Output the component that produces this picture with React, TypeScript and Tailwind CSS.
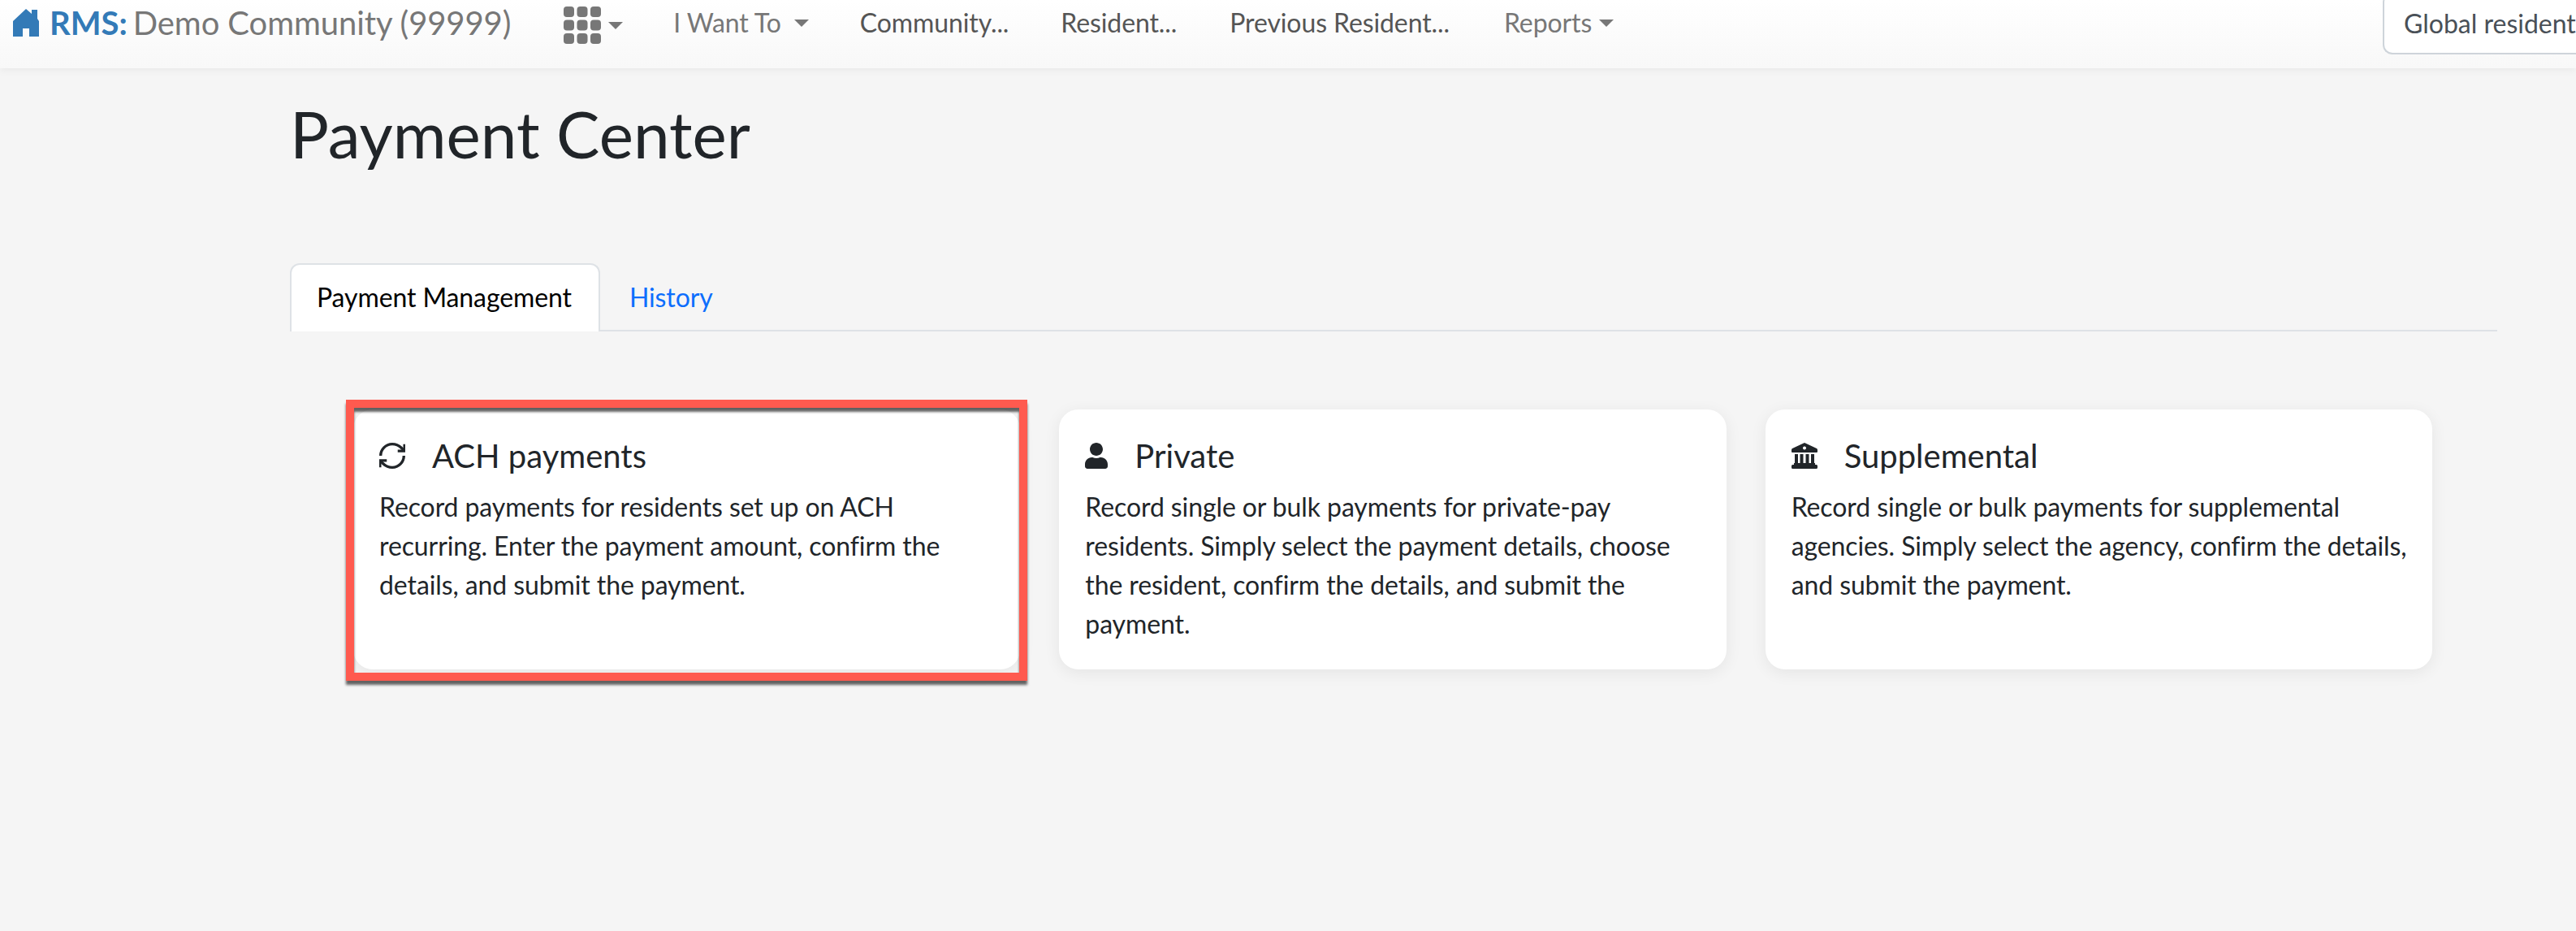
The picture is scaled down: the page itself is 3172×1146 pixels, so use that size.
import React from 'react';
import { FaUser } from 'react-icons/fa';

function SyncIcon({ className }: { className?: string }) {
  return (
    <svg viewBox="2.5 2.5 19 19" fill="none" stroke="currentColor" strokeWidth="2" className={className}>
      <path d="M3.5 12a8.5 8.5 0 0 1 8.5-8.5 9.5 9.5 0 0 1 6.5 2.6L21 8.5" />
      <path d="M21 3.5v5h-5" />
      <path d="M20.5 12a8.5 8.5 0 0 1-8.5 8.5 9.5 9.5 0 0 1-6.5-2.6L3 15.5" />
      <path d="M8 15.5H3v5" />
    </svg>
  );
}

function BankIcon({ className }: { className?: string }) {
  return (
    <svg viewBox="0 0 32 32" fill="currentColor" className={className}>
      <path fillRule="evenodd" d="M16 0 L31 7 Q32 7.5 32 9 V11 Q32 12 31 12 H1 Q0 12 0 11 V9 Q0 7.5 1 7 Z M16 4.5 a2 2 0 1 0 0.01 0 Z" />
      <rect x="4" y="14" width="4" height="11" />
      <rect x="10.5" y="14" width="4" height="11" />
      <rect x="17.5" y="14" width="4" height="11" />
      <rect x="24" y="14" width="4" height="11" />
      <path d="M3 25 H29 V27 H30.5 Q32 27 32 28.5 V30.5 Q32 32 30.5 32 H1.5 Q0 32 0 30.5 V28.5 Q0 27 1.5 27 H3 Z" />
    </svg>
  );
}

const CARDS = [
  {
    icon: SyncIcon,
    iconClass: 'w-[32px] h-[32px]',
    title: 'ACH payments',
    text: 'Record payments for residents set up on ACH recurring. Enter the payment amount, confirm the details, and submit the payment.',
    marked: true,
  },
  {
    icon: FaUser,
    iconClass: 'w-[28px] h-[32px]',
    title: 'Private',
    text: 'Record single or bulk payments for private-pay residents. Simply select the payment details, choose the resident, confirm the details, and submit the payment.',
    marked: false,
  },
  {
    icon: BankIcon,
    iconClass: 'w-[32px] h-[32px]',
    title: 'Supplemental',
    text: 'Record single or bulk payments for supplemental agencies. Simply select the agency, confirm the details, and submit the payment.',
    marked: false,
  },
];

function Caret() {
  return <span className="w-0 h-0 border-t-[9px] border-x-[9px] border-t-[#777] border-x-transparent" />;
}

function HomeIcon() {
  return (
    <svg viewBox="0 0 34 34" className="w-[34px] h-[34px] fill-[#337ab7]">
      <path d="M1 15 L17 0 L24 6 V1 H31 V12 L33 15 V34 H21 V24 H13 V34 H1 Z" />
    </svg>
  );
}

function GridIcon() {
  return (
    <svg viewBox="0 0 46 46" className="w-[46px] h-[46px] fill-[#777]">
      {[0, 16.5, 33].map((y) =>
        [0, 16.5, 33].map((x) => <rect key={`${x}-${y}`} x={x} y={y} width="13" height="13" rx="4" />),
      )}
    </svg>
  );
}

export default function App() {
  return (
    <div className="h-[1146px] overflow-hidden bg-[#f5f5f5] text-[#212529] font-['Lato',sans-serif]">
      {/* Navbar */}
      <nav className="h-[84px] flex items-center pl-[15px] overflow-hidden bg-gradient-to-b from-white to-[#f8f8f8] shadow-[0_2px_10px_rgba(0,0,0,0.06)] relative">
        <div className="flex items-center -mt-[28px] text-[40px] leading-[48px] whitespace-nowrap">
          <HomeIcon />
          <span className="ml-[12px] font-bold text-[#337ab7]">RMS:</span>
          <span className="ml-[7px] text-[#777] tracking-[-0.1px]">Demo Community (99999)</span>
        </div>
        <div className="flex items-center -mt-[22px] ml-[65px] gap-[9px]">
          <GridIcon />
          <Caret />
        </div>
        <div className="flex items-center -mt-[28px] text-[32px] leading-[48px] tracking-[-0.1px] whitespace-nowrap">
          <span className="ml-[62px] text-[#777]">I Want To</span>
          <span className="ml-[16px] flex"><Caret /></span>
          <span className="ml-[63px] text-[#555]">Community...</span>
          <span className="ml-[64px] text-[#555]">Resident...</span>
          <span className="ml-[65px] text-[#555]">Previous Resident...</span>
          <span className="ml-[67px] text-[#777]">Reports</span>
          <span className="ml-[9px] flex"><Caret /></span>
        </div>
        <div className="ml-auto w-[240px] h-[76px] -mt-[27px] -mr-[2px] pl-[24px] flex items-center shrink-0 bg-white border-2 border-[#ced4da] border-r-0 rounded-l-[12px] text-[32px] text-[#495057] whitespace-nowrap overflow-hidden">
          Global resident search
        </div>
      </nav>

      <main className="pl-[357px] pr-[97px]">
        <h1 className="mt-[32px] text-[80px] leading-[96px] font-normal">Payment Center</h1>

        {/* Tabs */}
        <div className="mt-[112px] flex border-b-2 border-[#dee2e6] text-[32px] leading-[48px] tracking-[-0.1px]">
          <div className="h-[84px] -mb-[2px] pl-[31px] pr-[33px] pt-[16px] bg-white border-2 border-b-0 border-[#dee2e6] rounded-t-[12px] text-black">
            Payment Management
          </div>
          <div className="px-[36px] pt-[18px] text-[#0d6efd]">History</div>
        </div>

        {/* Cards */}
        <div className="mt-[96px] ml-[78px] mr-[80px] grid grid-cols-3 gap-[48px]">
          {CARDS.map(({ icon: Icon, iconClass, title, text, marked }) => (
            <div key={title} className="relative h-[320px] pl-[32px] pr-[24px] pt-[33px] bg-white rounded-[24px] shadow-[0_4px_20px_rgba(0,0,0,0.07)]">
              <div className="flex items-center mb-[15px] text-[40px] leading-[48px]">
                <Icon className={`${iconClass} mr-[33px] shrink-0`} />
                {title}
              </div>
              <p className="text-[32px] leading-[48px] tracking-[-0.1px]">{text}</p>
              {marked && (
                <div className="absolute -left-[9px] -right-[9px] -top-[12px] -bottom-[14px] border-[10px] border-[#ff5a4f] shadow-[0_5px_3px_rgba(0,0,0,0.6),inset_0_5px_3px_rgba(0,0,0,0.6)]" />
              )}
            </div>
          ))}
        </div>
      </main>
    </div>
  );
}
